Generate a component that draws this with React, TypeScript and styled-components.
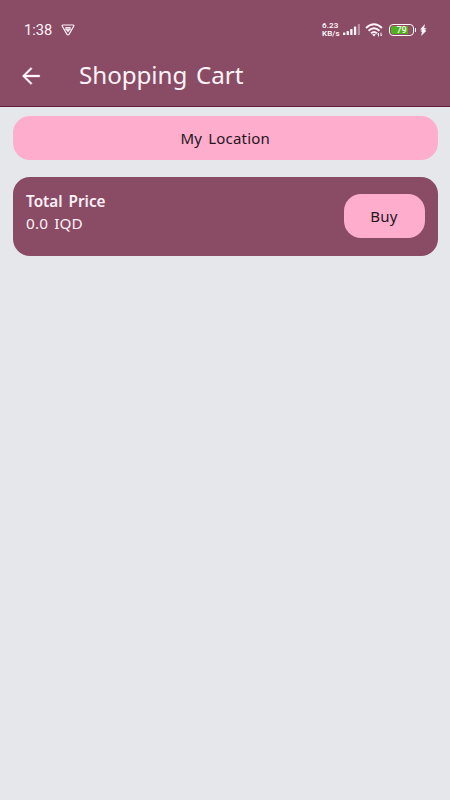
import React from 'react';
import styled, { createGlobalStyle } from 'styled-components';

const GlobalStyle = createGlobalStyle`
  * { box-sizing: border-box; }
  body { margin: 0; background: #e5e7eb; }
`;

const Screen = styled.div`
  width: 100%;
  min-height: 800px;
  background: #e5e7eb;
  font-family: 'Noto Sans', sans-serif;
`;

const Header = styled.header`
  height: 107px;
  background: #8a4b64;
  border-bottom: 1px solid #611c3e;
  color: #fff4f9;
`;

const StatusBar = styled.div`
  height: 48px;
  padding: 11px 23px 0 24px;
  display: flex;
  align-items: center;
`;

const Clock = styled.span`
  font: 400 14.7px/20px Roboto, sans-serif;
  width: 37px;
  white-space: nowrap;
`;

const Spacer = styled.div`
  flex: 1;
`;

const Speed = styled.div`
  width: 21px;
  font: 600 8px/8px Roboto, sans-serif;
  letter-spacing: 0.1px;
  white-space: nowrap;
`;

const Icon = styled.svg<{ $gap?: number }>`
  display: block;
  flex: none;
  margin-left: ${({ $gap = 0 }) => $gap}px;
`;

const Battery = styled.div`
  position: relative;
  margin-left: 5px;
  width: 25px;
  height: 12px;
  padding: 1px;
  border: 1px solid #fff4f9;
  border-radius: 4px;

  &::after {
    content: '';
    position: absolute;
    right: -3px;
    top: 3px;
    width: 1.5px;
    height: 4px;
    background: #fff4f9;
  }
`;

const BatteryLevel = styled.div`
  height: 8px;
  border-radius: 2px;
  background: linear-gradient(to right, #50b020 79%, #8a5269 79%);
  font: 500 9px/9px Roboto, sans-serif;
  text-align: center;
`;

const Toolbar = styled.div`
  height: 56px;
  padding-left: 20px;
  display: flex;
  align-items: center;
`;

const Title = styled.h1`
  margin: -2px 0 0 37px;
  font-size: 24.2px;
  line-height: 32px;
  font-weight: 400;
  letter-spacing: -0.05px;
  word-spacing: 2.5px;
  white-space: nowrap;
`;

const Content = styled.main`
  padding: 9px 12.5px 0 13px;
  display: flex;
  flex-direction: column;
  gap: 17.5px;
`;

const Button = styled.button<{ $width: string; $radius: number }>`
  width: ${({ $width }) => $width};
  height: 43.6px;
  padding: 0;
  border: 0;
  border-radius: ${({ $radius }) => $radius}px;
  background: #ffadcd;
  color: #25151d;
  font: 400 15px/20px 'Noto Sans', sans-serif;
  letter-spacing: 0.2px;
  word-spacing: 2px;
`;

const TotalCard = styled.section`
  height: 78.6px;
  padding: 13px 13px 0 13px;
  border-radius: 17px;
  background: #8a4b64;
  color: #fff0f7;
  display: flex;
  justify-content: space-between;
  align-items: flex-start;

  ${Button} { margin-top: 4.4px; }
`;

const Price = styled.div`
  font-size: 15.3px;
  line-height: 22px;
  letter-spacing: 0.15px;
  word-spacing: 2px;
`;

const PriceLabel = styled.div`
  font-weight: 600;
  letter-spacing: 0;
`;

export default function App() {
  return (
    <Screen>
      <GlobalStyle />
      <Header>
        <StatusBar>
          <Clock>1:38</Clock>
          <Icon width="14" height="12" viewBox="0 0 14 12" fill="none" stroke="currentColor">
            <path d="M2 1h10q1.4 0 .7 1.3L8 10.3q-1 1.2-2 0L1.300 2.300Q.6 1 2 1Z" strokeWidth="1.2" />
            <path d="M4.400 3h5.200v2.200L7 8.300 4.400 5.200Z" fill="currentColor" stroke="none" />
            <path d="M5.500 4.700h3" stroke="#8a4b64" strokeWidth=".6" />
          </Icon>
          <Spacer />
          <Speed>6.23<br />KB/s</Speed>
          <Icon width="17" height="11" viewBox="0 0 17 11" fill="currentColor">
            <rect x="0" y="8.500" width="2.300" height="2.500" rx=".5" />
            <rect x="3.600" y="7" width="2.300" height="4" rx=".5" />
            <rect x="7.200" y="5" width="2.300" height="6" rx=".5" />
            <rect x="10.900" y="2.500" width="2.300" height="8.500" rx=".5" />
            <rect x="14.700" y="0" width="2.300" height="11" rx=".5" opacity=".4" />
          </Icon>
          <Icon $gap={5} width="19" height="14" viewBox="0 0 19 14" fill="none" stroke="currentColor" strokeWidth="1.900">
            <path d="M1 5Q9 -2.500 17 5" />
            <path d="M3.500 7.700Q9 2.700 14.500 7.700" />
            <path d="M6 10.200Q9 7.700 12 10.200" />
            <path d="M7.200 11.500Q9 10 10.800 11.500L9 13.500Z" fill="currentColor" stroke="none" />
            <path d="M13.500 13.500v-3.300l-1 1.300M16 9.700V13l1-1.300" strokeWidth="1" />
          </Icon>
          <Battery><BatteryLevel>79</BatteryLevel></Battery>
          <Icon $gap={6} width="7" height="12" viewBox="0 0 7 12" fill="currentColor">
            <path d="M4.900 0 .2 5.300l2.200.8-2.300.8 1.900.9L1.100 12 6.400 6.800 4.400 5.800l2.400-1.100-2.600-.8Z" />
          </Icon>
        </StatusBar>
        <Toolbar>
          <Icon width="22" height="22" viewBox="0 0 24 24" fill="currentColor" stroke="currentColor" strokeWidth=".4">
            <path d="M21.500 11v2H6.300l7 7-1.400 1.400L2.500 12l9.400-9.400L13.300 4l-7 7Z" />
          </Icon>
          <Title>Shopping Cart</Title>
        </Toolbar>
      </Header>
      <Content>
        <Button $width="100%" $radius={17}>My Location</Button>
        <TotalCard>
          <Price>
            <PriceLabel>Total Price</PriceLabel>
            0.0 IQD
          </Price>
          <Button $width="81px" $radius={17}>Buy</Button>
        </TotalCard>
      </Content>
    </Screen>
  );
}
